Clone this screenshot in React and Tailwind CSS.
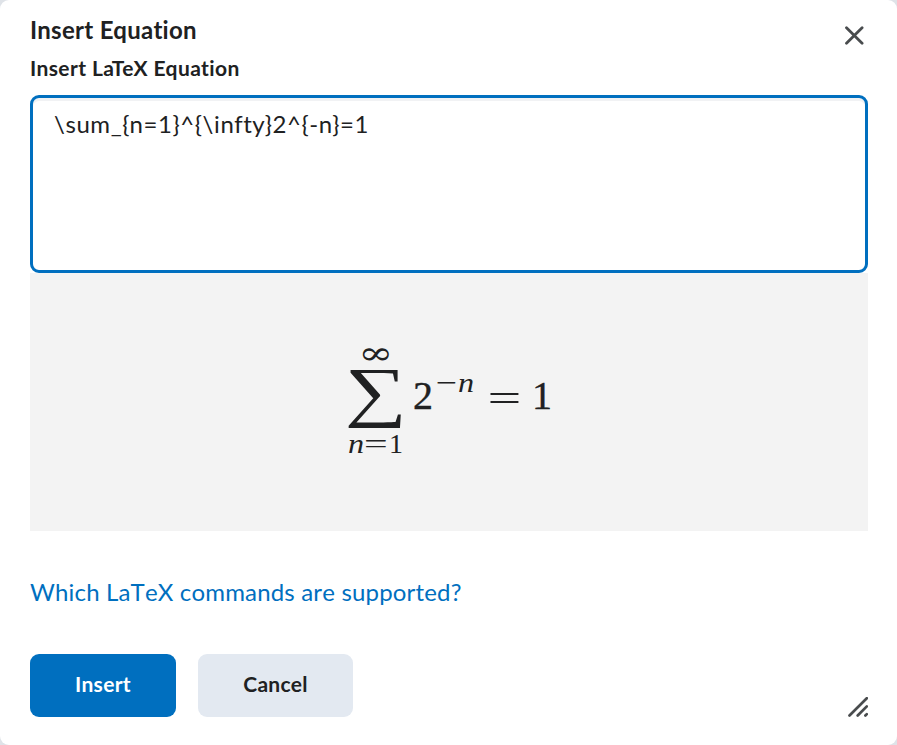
import React, { useState } from "react";

const CloseIcon = () => (
  <svg className="w-5 h-5" viewBox="0 0 20 20" fill="none" stroke="currentColor">
    <path strokeLinecap="round" strokeWidth={2.8} d="M2.5 1.7l15.6 15.6M18.1 1.7L2.5 17.3" />
  </svg>
);

const ResizeIcon = () => (
  <svg className="w-5 h-5" viewBox="0 0 20 20" fill="none" stroke="currentColor">
    <path strokeLinecap="round" strokeWidth={2.7} d="M1.5 18.5L18.8 1.2M9.7 18.5l9.1-9.1M17.4 18.5l1.4-1.4" />
  </svg>
);

const EquationPreview = () => (
  <div className="flex h-[258px] items-start bg-[#f3f3f3] pl-[318px] pt-[70px] font-['Liberation_Serif','DejaVu_Serif',serif] text-[40px] leading-none text-[#202122]">
    <div className="flex w-[56px] flex-col items-center">
      <span className="h-[22px] scale-x-150 scale-y-115 font-['DejaVu_Math_TeX_Gyre',serif] text-[28px] leading-[24px]">∞</span>
      <span className="flex h-[66px] scale-x-130 items-center text-[67px] leading-[66px]">
        <span className="-mt-[14px]">∑</span>
      </span>
      <span className="-mt-px flex h-[28px] items-center text-[28px] leading-[28px]">
        <i className="scale-x-115">n</i>
        <span className="inline-block origin-center scale-x-150 px-[5px]">=</span>
        1
      </span>
    </div>
    <span className="ml-[9px] mt-[33px] w-[20px] [-webkit-text-stroke:0.4px]">2</span>
    <span className="ml-[3px] mt-[26px] flex w-[38px] justify-between text-[28px]">
      <span className="inline-block origin-left scale-x-135">−</span>
      <i className="origin-right scale-x-115">n</i>
    </span>
    <span className="ml-[19px] mt-[36px] inline-block w-[22px] scale-x-150">=</span>
    <span className="ml-[17px] mt-[33px] [-webkit-text-stroke:0.4px]">1</span>
  </div>
);

const App = () => {
  const [latex, setLatex] = useState("\\sum_{n=1}^{\\infty}2^{-n}=1");

  return (
    <div className="h-[745px] w-[897px] overflow-hidden bg-[#dfe3e8]">
      <div className="h-full rounded-[9px] bg-white pl-[30px] pr-[29px] pt-[14px] font-['Lato',sans-serif] text-[#202122]">
        <div className="flex h-[41px] items-start justify-between">
          <h2 className="text-[24px] font-bold leading-[31px] tracking-[0.3px]">Insert Equation</h2>
          <button className="mr-[4px] mt-[12px] text-[#494c4e]" aria-label="Close">
            <CloseIcon />
          </button>
        </div>

        <label className="block h-[40px] text-[21px] font-bold leading-[26px] tracking-[0.4px]">Insert LaTeX Equation</label>
        <textarea
          value={latex}
          onChange={(e) => setLatex(e.target.value)}
          className="block h-[178px] w-[838px] resize-none rounded-[9px] border-3 border-[#006fbf] bg-white px-[21px] py-[8px] text-[24px] leading-[36px] tracking-[0.58px] shadow-[inset_0_3px_0_0_#f1f2f4] outline-none"
        />
        <EquationPreview />

        <a href="#" className="mt-[43px] block h-[80px] text-[24px] leading-[36px] tracking-[0.17px] [font-kerning:none] text-[#006fbf]">
          Which LaTeX commands are supported?
        </a>

        <div className="flex items-start">
          <button className="h-[63px] w-[146px] rounded-[9px] bg-[#006fbf] pb-[3px] text-[21px] font-bold tracking-[0.3px] text-white">Insert</button>
          <button className="ml-[22px] h-[63px] w-[155px] rounded-[9px] bg-[#e3e9f1] pb-[3px] text-[21px] font-bold tracking-[0.3px]">Cancel</button>
          <span className="ml-auto mt-[43px] text-[#494c4e]">
            <ResizeIcon />
          </span>
        </div>
      </div>
    </div>
  );
};

export default App;
